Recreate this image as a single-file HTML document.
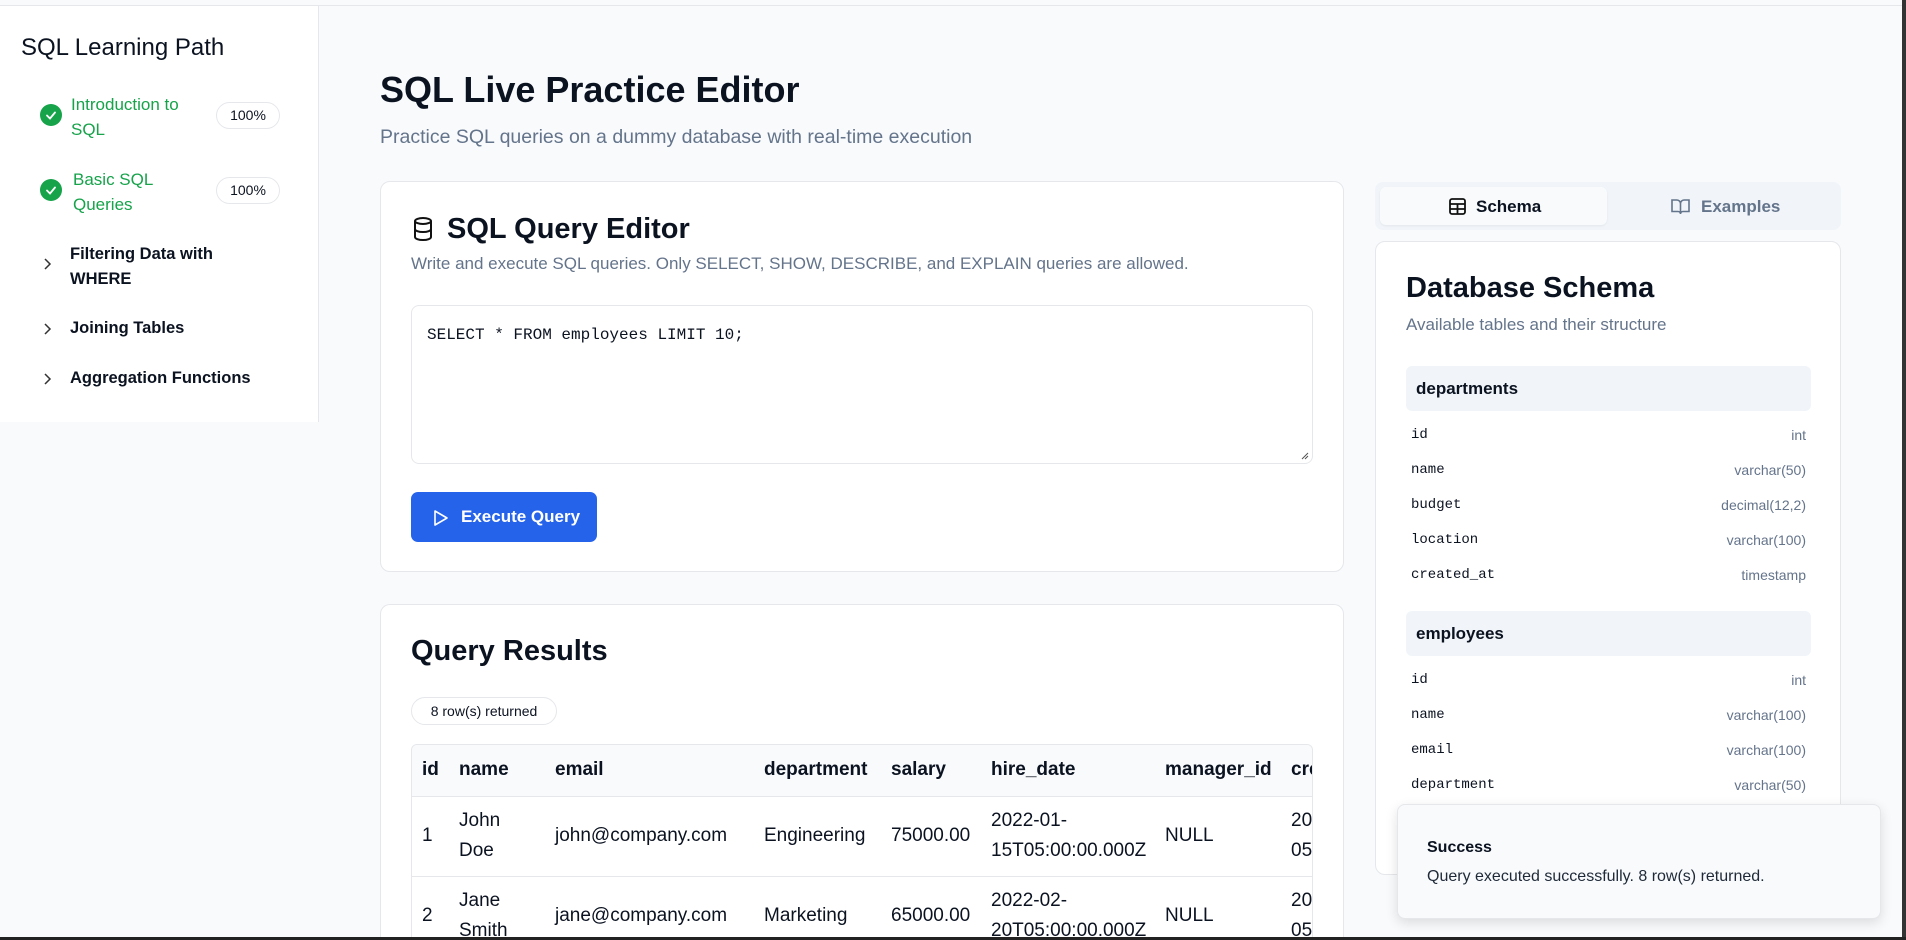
<!DOCTYPE html>
<html style="width:1906px;height:940px;overflow:hidden"><head><meta charset="utf-8"><style>
*{box-sizing:border-box;margin:0;padding:0}
body{width:1906px;height:940px;overflow:hidden;background:#f8fafc;font-family:"Liberation Sans",Arial,sans-serif;color:#0b1220;position:relative}
.abs{position:absolute}
.topline{left:0;top:0;width:1906px;height:6px;background:#f8fafc;border-bottom:1px solid #e5e7eb}
.side{left:0;top:6px;width:319px;height:416px;background:#fff;border-right:1px solid #e5e7eb}
.side h2{position:absolute;left:21px;top:28px;font-size:24px;font-weight:400;color:#0b1220}
.item{position:absolute;left:40px;font-size:17px;line-height:25px}
.green{color:#16a34a}
.chk{position:absolute;width:22px;height:22px;border-radius:50%;background:#16a34a;left:40px}
.pct{position:absolute;left:216px;width:64px;height:27px;border:1px solid #e5e7eb;border-radius:14px;font-size:14px;text-align:center;line-height:25px;font-weight:400}
.card{background:#fff;border:1px solid #e5e7eb;border-radius:10px}
.mono{font-family:"Liberation Mono",monospace}
table{border-collapse:collapse;font-size:19px}
</style></head><body>
<div class="abs topline"></div>
<div class="abs side">
<h2>SQL Learning Path</h2>
<div class="chk" style="top:98px"><svg width="22" height="22" viewBox="0 0 22 22"><path d="M7 11.5l3 3 5-6" stroke="#fff" stroke-width="1.8" fill="none" stroke-linecap="round"/></svg></div>
<div class="item green" style="left:71px;top:86px">Introduction to<br>SQL</div>
<div class="pct" style="top:96px">100%</div>
<div class="chk" style="top:173px"><svg width="22" height="22" viewBox="0 0 22 22"><path d="M7 11.5l3 3 5-6" stroke="#fff" stroke-width="1.8" fill="none" stroke-linecap="round"/></svg></div>
<div class="item green" style="left:73px;top:161px">Basic SQL<br>Queries</div>
<div class="pct" style="top:171px">100%</div>
<svg class="abs" style="left:43px;top:251px" width="10" height="14"><path d="M2 2l5 5-5 5" stroke="#333" stroke-width="1.5" fill="none"/></svg>
<div class="item" style="left:70px;top:236px;font-weight:600;font-size:16.5px">Filtering Data with<br>WHERE</div>
<svg class="abs" style="left:43px;top:316px" width="10" height="14"><path d="M2 2l5 5-5 5" stroke="#333" stroke-width="1.5" fill="none"/></svg>
<div class="item" style="left:70px;top:310px;font-weight:600;font-size:16.5px">Joining Tables</div>
<svg class="abs" style="left:43px;top:366px" width="10" height="14"><path d="M2 2l5 5-5 5" stroke="#333" stroke-width="1.5" fill="none"/></svg>
<div class="item" style="left:70px;top:360px;font-weight:600;font-size:16.5px">Aggregation Functions</div>
</div>

<div class="abs" style="left:380px;top:69px;font-size:36px;font-weight:700">SQL Live Practice Editor</div>
<div class="abs" style="left:380px;top:126px;font-size:19.5px;color:#64748b">Practice SQL queries on a dummy database with real-time execution</div>

<div class="abs card" style="left:380px;top:181px;width:964px;height:391px">
<svg class="abs" style="left:30px;top:34px" width="24" height="26" viewBox="0 0 24 26"><ellipse cx="12" cy="5" rx="8" ry="3" stroke="#111" stroke-width="2" fill="none"/><path d="M4 5v16c0 1.7 3.6 3 8 3s8-1.3 8-3V5M4 13c0 1.7 3.6 3 8 3s8-1.3 8-3" stroke="#111" stroke-width="2" fill="none"/></svg>
<div class="abs" style="left:66px;top:31px;font-size:29px;font-weight:600">SQL Query Editor</div>
<div class="abs" style="left:30px;top:72px;font-size:17px;color:#64748b">Write and execute SQL queries. Only SELECT, SHOW, DESCRIBE, and EXPLAIN queries are allowed.</div>
<div class="abs" style="left:30px;top:123px;width:902px;height:159px;border:1px solid #e5e7eb;border-radius:8px">
<div class="abs mono" style="left:15px;top:20px;font-size:16px">SELECT * FROM employees LIMIT 10;</div>
<svg class="abs" style="right:3px;bottom:3px" width="10" height="10"><path d="M9 3L3 9M9 6L6 9" stroke="#555" stroke-width="1"/></svg>
</div>
<div class="abs" style="left:30px;top:310px;width:186px;height:50px;background:#2563eb;border-radius:7px;color:#fff;font-size:17px;font-weight:600;line-height:50px;padding-left:50px">Execute Query</div>
<svg class="abs" style="left:52px;top:327px" width="16" height="18"><path d="M2 2l12 7-12 7z" stroke="#fff" stroke-width="1.6" fill="none" stroke-linejoin="round"/></svg>
</div>

<div class="abs card" style="left:380px;top:604px;width:964px;height:333px;overflow:hidden;border-bottom:none;border-radius:10px 10px 0 0">
<div class="abs" style="left:30px;top:30px;font-size:29px;font-weight:600">Query Results</div>
<div class="abs" style="left:30px;top:92px;width:146px;height:28px;border:1px solid #e5e7eb;border-radius:14px;font-size:14px;font-weight:400;text-align:center;line-height:26px">8 row(s) returned</div>
<div class="abs" style="left:30px;top:139px;width:902px;height:194px;border:1px solid #e5e7eb;border-bottom:none;border-radius:6px 6px 0 0;overflow:hidden">
<table style="width:1104px">
<tr style="background:#f8fafc;height:51px;border-bottom:1px solid #e5e7eb;font-weight:600;text-align:left">
<td style="width:47px;padding-left:10px">id</td><td style="width:96px">name</td><td style="width:209px">email</td><td style="width:127px">department</td><td style="width:100px">salary</td><td style="width:174px">hire_date</td><td style="width:126px">manager_id</td><td>created_at</td></tr>
<tr style="height:80px;border-bottom:1px solid #e5e7eb;line-height:30px"><td style="padding-left:10px">1</td><td>John<br>Doe</td><td>john@company.com</td><td>Engineering</td><td>75000.00</td><td>2022-01-<br>15T05:00:00.000Z</td><td>NULL</td><td>2022-<br>05T</td></tr>
<tr style="height:80px;line-height:30px"><td style="padding-left:10px">2</td><td>Jane<br>Smith</td><td>jane@company.com</td><td>Marketing</td><td>65000.00</td><td>2022-02-<br>20T05:00:00.000Z</td><td>NULL</td><td>2022-<br>05T</td></tr>
</table></div>
</div>

<div class="abs" style="left:1375px;top:182px;width:466px;height:48px;background:#f1f5f9;border-radius:8px">
<div class="abs" style="left:5px;top:5px;width:227px;height:38px;background:#f8fafc;border-radius:6px;box-shadow:0 1px 2px rgba(0,0,0,.06)"></div>
<svg class="abs" style="left:74px;top:16px" width="17" height="17" viewBox="0 0 17 17"><rect x="1" y="1" width="15" height="15" rx="2" stroke="#111" stroke-width="1.8" fill="none"/><path d="M1 6h15M1 11h15M8.5 6v10" stroke="#111" stroke-width="1.8"/></svg>
<div class="abs" style="left:101px;top:15px;font-size:17px;font-weight:600">Schema</div>
<svg class="abs" style="left:296px;top:16px" width="19" height="17" viewBox="0 0 19 17"><path d="M1 2h5a3.5 3.5 0 013.5 3.5V16A2.5 2.5 0 007 13.5H1zM18 2h-5a3.5 3.5 0 00-3.5 3.5V16a2.5 2.5 0 012.5-2.5h6z" stroke="#64748b" stroke-width="1.6" fill="none"/></svg>
<div class="abs" style="left:326px;top:15px;font-size:17px;font-weight:600;color:#64748b">Examples</div>
</div>

<div class="abs card" style="left:1375px;top:241px;width:466px;height:634px;overflow:hidden">
<div class="abs" style="left:30px;top:30px;font-size:29px;font-weight:600">Database Schema</div>
<div class="abs" style="left:30px;top:73px;font-size:17px;color:#64748b">Available tables and their structure</div>
<div class="abs" style="left:30px;top:124px;width:405px;height:45px;background:#f1f5f9;border-radius:6px;font-size:17px;font-weight:600;line-height:45px;padding-left:10px">departments</div>
<div class="abs" style="left:35px;top:176px;width:395px;font-size:14px;line-height:35px">
<div style="display:flex;justify-content:space-between"><span class="mono">id</span><span style="color:#64748b">int</span></div>
<div style="display:flex;justify-content:space-between"><span class="mono">name</span><span style="color:#64748b">varchar(50)</span></div>
<div style="display:flex;justify-content:space-between"><span class="mono">budget</span><span style="color:#64748b">decimal(12,2)</span></div>
<div style="display:flex;justify-content:space-between"><span class="mono">location</span><span style="color:#64748b">varchar(100)</span></div>
<div style="display:flex;justify-content:space-between"><span class="mono">created_at</span><span style="color:#64748b">timestamp</span></div>
</div>
<div class="abs" style="left:30px;top:369px;width:405px;height:45px;background:#f1f5f9;border-radius:6px;font-size:17px;font-weight:600;line-height:45px;padding-left:10px">employees</div>
<div class="abs" style="left:35px;top:421px;width:395px;font-size:14px;line-height:35px">
<div style="display:flex;justify-content:space-between"><span class="mono">id</span><span style="color:#64748b">int</span></div>
<div style="display:flex;justify-content:space-between"><span class="mono">name</span><span style="color:#64748b">varchar(100)</span></div>
<div style="display:flex;justify-content:space-between"><span class="mono">email</span><span style="color:#64748b">varchar(100)</span></div>
<div style="display:flex;justify-content:space-between"><span class="mono">department</span><span style="color:#64748b">varchar(50)</span></div>
</div>
</div>

<div class="abs" style="left:1397px;top:804px;width:484px;height:115px;background:#f8fafc;border:1px solid #e5e7eb;border-radius:8px;box-shadow:0 4px 12px rgba(0,0,0,.12)">
<div class="abs" style="left:29px;top:34px;font-size:16px;font-weight:600">Success</div>
<div class="abs" style="left:29px;top:63px;font-size:16px;color:#1f2937">Query executed successfully. 8 row(s) returned.</div>
</div>

<div class="abs" style="left:1902px;top:0;width:4px;height:940px;background:#333"></div>
<div class="abs" style="left:0;top:937px;width:1906px;height:3px;background:#222"></div>
</body></html>
